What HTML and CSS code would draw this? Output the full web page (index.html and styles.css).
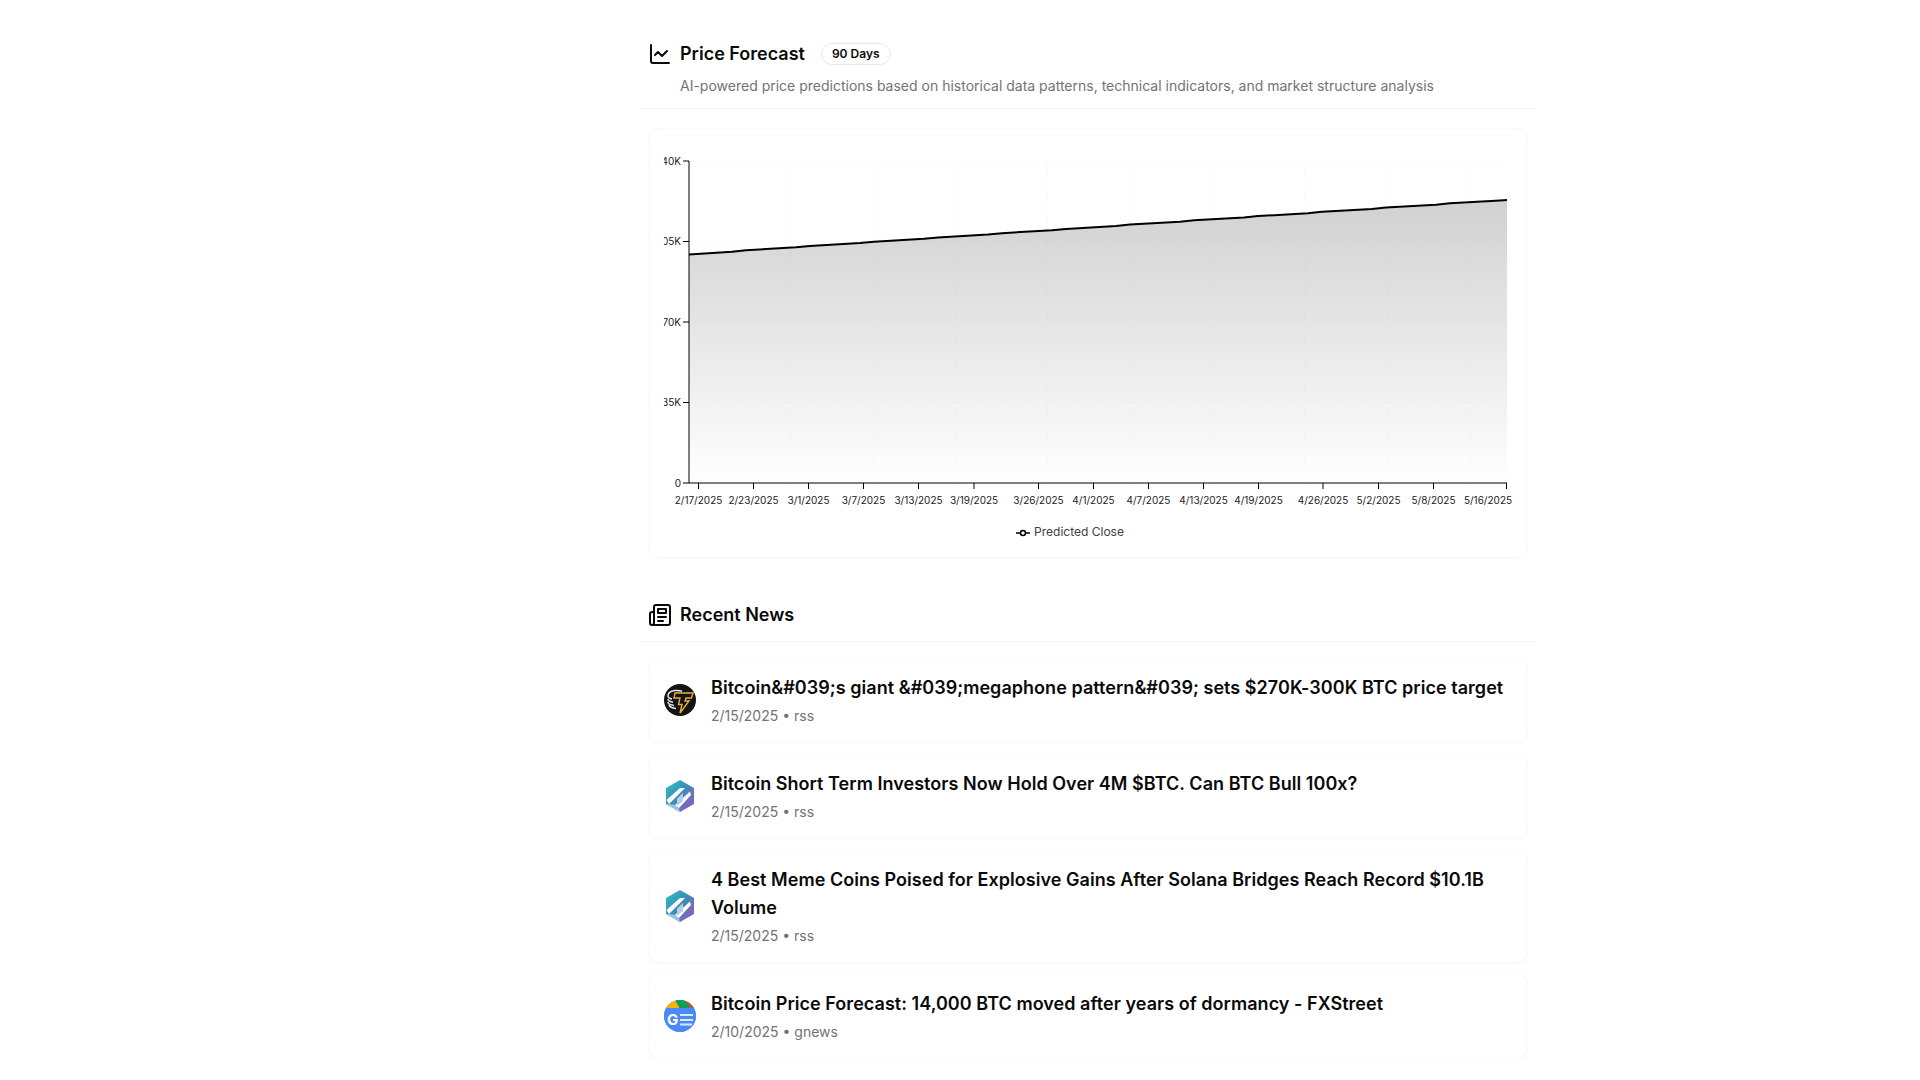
FILE: index.html
```html
<!DOCTYPE html>
<html lang="en">
<head>
    <meta charset="UTF-8">
    <meta name="viewport" content="width=device-width, initial-scale=1.0">
    <title>Price Forecast</title>
    <link rel="stylesheet" href="styles.css">
</head>
<body>

<div class="sidebar"></div>

<main class="content">
    <section class="section">
        <div class="section-head">
            <div class="section-title">
                <svg class="icon" viewBox="0 0 24 24"><path d="M3 3v16a2 2 0 0 0 2 2h16"/><path d="m19 9-5 5-4-4-3 3"/></svg>
                <h2>Price Forecast</h2>
                <span class="badge">90 Days</span>
            </div>
            <p class="section-sub">AI-powered price predictions based on historical data patterns, technical indicators, and market structure analysis</p>
        </div>

        <div class="card chart-card">
            <svg class="chart" viewBox="664 146 848 373" width="848" height="373">
                <defs>
                    <linearGradient id="areaFill" x1="0" y1="0" x2="0" y2="1">
                        <stop offset="0" stop-color="#000" stop-opacity="0.18"/>
                        <stop offset="1" stop-color="#000" stop-opacity="0"/>
                    </linearGradient>
                </defs>

                <g class="grid">
                    <line x1="689" x2="1507" y1="161.5" y2="161.5"/>
                    <line x1="689" x2="1507" y1="241.5" y2="241.5"/>
                    <line x1="689" x2="1507" y1="322.5" y2="322.5"/>
                    <line x1="689" x2="1507" y1="402.5" y2="402.5"/>
                    <line x1="790.5" x2="790.5" y1="161" y2="483"/>
                    <line x1="873.5" x2="873.5" y1="161" y2="483"/>
                    <line x1="955.5" x2="955.5" y1="161" y2="483"/>
                    <line x1="1047.5" x2="1047.5" y1="161" y2="483"/>
                    <line x1="1130.5" x2="1130.5" y1="161" y2="483"/>
                    <line x1="1213.5" x2="1213.5" y1="161" y2="483"/>
                    <line x1="1304.5" x2="1304.5" y1="161" y2="483"/>
                    <line x1="1387.5" x2="1387.5" y1="161" y2="483"/>
                    <line x1="1470.5" x2="1470.5" y1="161" y2="483"/>
                </g>

                <path class="area" d="M689 254.5l43 -2.87 l14 -1.4 l50 -2.87 l14 -1.4 l50 -2.87 l14 -1.4 l50 -2.87 l14 -1.4 l50 -2.87 l14 -1.4 l50 -2.87 l14 -1.4 l50 -2.87 l14 -1.4 l50 -2.87 l14 -1.4 l50 -2.87 l14 -1.4 l50 -2.87 l14 -1.4 l50 -2.87 l14 -1.4 l50 -2.87 l14 -1.4 l50 -2.87 l7 -0.39 V483 H689 Z"/>

                <g class="axis">
                    <line x1="689" x2="689" y1="161" y2="483"/>
                    <line x1="689" x2="1507" y1="483" y2="483"/>
                </g>
                <g class="ticks">
                    <line x1="683" x2="689" y1="161" y2="161"/>
                    <line x1="683" x2="689" y1="241.5" y2="241.5"/>
                    <line x1="683" x2="689" y1="322" y2="322"/>
                    <line x1="683" x2="689" y1="402.5" y2="402.5"/>
                    <line x1="683" x2="689" y1="483" y2="483"/>
                    <line x1="698.5" x2="698.5" y1="483" y2="489"/>
                    <line x1="753.5" x2="753.5" y1="483" y2="489"/>
                    <line x1="808.5" x2="808.5" y1="483" y2="489"/>
                    <line x1="863.5" x2="863.5" y1="483" y2="489"/>
                    <line x1="918.5" x2="918.5" y1="483" y2="489"/>
                    <line x1="974" x2="974" y1="483" y2="489"/>
                    <line x1="1038.5" x2="1038.5" y1="483" y2="489"/>
                    <line x1="1093.5" x2="1093.5" y1="483" y2="489"/>
                    <line x1="1148.5" x2="1148.5" y1="483" y2="489"/>
                    <line x1="1203.5" x2="1203.5" y1="483" y2="489"/>
                    <line x1="1258.5" x2="1258.5" y1="483" y2="489"/>
                    <line x1="1323" x2="1323" y1="483" y2="489"/>
                    <line x1="1378.5" x2="1378.5" y1="483" y2="489"/>
                    <line x1="1433.5" x2="1433.5" y1="483" y2="489"/>
                    <line x1="1506.5" x2="1506.5" y1="483" y2="489"/>
                </g>

                <path class="price-line" d="M689 254.5l43 -2.87 l14 -1.4 l50 -2.87 l14 -1.4 l50 -2.87 l14 -1.4 l50 -2.87 l14 -1.4 l50 -2.87 l14 -1.4 l50 -2.87 l14 -1.4 l50 -2.87 l14 -1.4 l50 -2.87 l14 -1.4 l50 -2.87 l14 -1.4 l50 -2.87 l14 -1.4 l50 -2.87 l14 -1.4 l50 -2.87 l14 -1.4 l50 -2.87 l7 -0.39"/>

                <g class="y-labels">
                    <text x="681" y="165">140K</text>
                    <text x="681" y="245">105K</text>
                    <text x="681" y="326">70K</text>
                    <text x="681" y="406">35K</text>
                    <text x="681" y="487">0</text>
                </g>
                <g class="x-labels">
                    <text x="698.5" y="504">2/17/2025</text>
                    <text x="753.5" y="504">2/23/2025</text>
                    <text x="808.5" y="504">3/1/2025</text>
                    <text x="863.5" y="504">3/7/2025</text>
                    <text x="918.5" y="504">3/13/2025</text>
                    <text x="974" y="504">3/19/2025</text>
                    <text x="1038.5" y="504">3/26/2025</text>
                    <text x="1093.5" y="504">4/1/2025</text>
                    <text x="1148.5" y="504">4/7/2025</text>
                    <text x="1203.5" y="504">4/13/2025</text>
                    <text x="1258.5" y="504">4/19/2025</text>
                    <text x="1323" y="504">4/26/2025</text>
                    <text x="1378.5" y="504">5/2/2025</text>
                    <text x="1433.5" y="504">5/8/2025</text>
                    <text x="1488" y="504">5/16/2025</text>
                </g>
            </svg>
            <div class="legend">
                <svg class="legend-mark" viewBox="0 0 14 8"><line x1="0" x2="14" y1="4" y2="4"/><circle cx="7" cy="4" r="2.5"/></svg>
                <span>Predicted Close</span>
            </div>
        </div>
    </section>

    <section class="section">
        <div class="section-head">
            <div class="section-title">
                <svg class="icon" viewBox="0 0 24 24"><path d="M4 22h16a2 2 0 0 0 2-2V4a2 2 0 0 0-2-2H8a2 2 0 0 0-2 2v16a2 2 0 0 1-2 2Zm0 0a2 2 0 0 1-2-2v-9c0-1.1.9-2 2-2h2"/><path d="M18 14h-8"/><path d="M15 18h-5"/><path d="M10 6h8v4h-8V6Z"/></svg>
                <h2>Recent News</h2>
            </div>
        </div>

        <div class="news-list">
            <a class="card news-item">
                <svg class="news-logo" viewBox="0 0 32 32">
                    <circle cx="16" cy="16" r="16" fill="#141414"/>
                    <g fill="none" stroke="#e8e8e8" stroke-width="1.5">
                        <path d="M4 12c0-3 3-5 7-5.5 3-.3 5 0 7 .7"/>
                        <path d="M4 12c0 1.5 1.5 2.5 4 3"/>
                        <path d="M4 15c0 1.5 2 2.6 5 3.2"/>
                        <path d="M4 18c0 1.8 2.5 3 6 3.5"/>
                        <path d="M5 21c.5 1.8 3 3 7 3.5"/>
                    </g>
                    <path d="M11 9h18l-1.5 5h-5.5l-1 3h4l-9 12 2-8.5h-3.5l1.5-6.5h-6z" fill="#141414" stroke="#e3b041" stroke-width="1.4"/>
                </svg>
                <div class="news-body">
                    <h3>Bitcoin&amp;#039;s giant &amp;#039;megaphone pattern&amp;#039; sets $270K-300K BTC price target</h3>
                    <p>2/15/2025 • rss</p>
                </div>
            </a>
            <a class="card news-item">
                <svg class="news-logo" viewBox="0 0 32 32">
                    <use href="#hexLogo"/>
                </svg>
                <div class="news-body">
                    <h3>Bitcoin Short Term Investors Now Hold Over 4M $BTC. Can BTC Bull 100x?</h3>
                    <p>2/15/2025 • rss</p>
                </div>
            </a>
            <a class="card news-item">
                <svg class="news-logo" viewBox="0 0 32 32">
                    <use href="#hexLogo"/>
                </svg>
                <div class="news-body">
                    <h3>4 Best Meme Coins Poised for Explosive Gains After Solana Bridges Reach Record $10.1B Volume</h3>
                    <p>2/15/2025 • rss</p>
                </div>
            </a>
            <a class="card news-item">
                <svg class="news-logo" viewBox="0 0 32 32">
                    <g clip-path="url(#gnewsClip)">
                        <rect width="32" height="32" fill="#4a8af4"/>
                        <path d="M0 0h32v9H0z" fill="#0f9d58"/>
                        <path d="M0 0h11L16 9H0z" fill="#f4b400"/>
                        <path d="M20 0h12v9H28z" fill="#db4437"/>
                        <path d="M0 8h32v24H0z" fill="#4a8af4"/>
                    </g>
                    <text class="logo-letter" x="3" y="25">G</text>
                    <path d="M16 15h13M16 20h13M16 24.5h12" stroke="#dbe8fd" stroke-width="2" fill="none"/>
                </svg>
                <div class="news-body">
                    <h3>Bitcoin Price Forecast: 14,000 BTC moved after years of dormancy - FXStreet</h3>
                    <p>2/10/2025 • gnews</p>
                </div>
            </a>
        </div>
    </section>
</main>

<svg class="sprite" width="0" height="0">
    <defs>
        <clipPath id="gnewsClip"><circle cx="16" cy="16" r="16"/></clipPath>
        <linearGradient id="hexFill" x1="0" y1="0" x2="1" y2="1">
            <stop offset="0" stop-color="#2ac6c6"/>
            <stop offset="0.45" stop-color="#3a8fb8"/>
            <stop offset="1" stop-color="#a24fc0"/>
        </linearGradient>
        <g id="hexLogo">
            <path d="M16 0 30 8V24L16 32 2 24V8z" fill="url(#hexFill)"/>
            <path d="M2 24 5 24 11 25 15 28 16 32z" fill="#9cc4e6"/>
            <path d="M2.5 20 16 8h5L5 24z" fill="#fff"/>
            <path d="M11 25 26 11.5 27 15 15 28z" fill="#fff"/>
            <path d="M13 18.5 19 13v8l-6 5z" fill="#b4cdea"/>
        </g>
    </defs>
</svg>

</body>
</html>
```

FILE: styles.css
```css
* {
    box-sizing: border-box;
}
body {
    font-family: 'Inter', 'Liberation Sans', sans-serif;
    margin: 0;
    padding: 0;
    background-color: #fff;
    color: #0a0a0a;
    display: flex;
}
.sidebar {
    width: 256px;
    flex-shrink: 0;
}
.content {
    width: 896px;
    margin: 0 auto;
    padding-top: 40px;
    display: flex;
    flex-direction: column;
    gap: 43px;
}
.section-head {
    padding: 0 8px 12px;
    border-bottom: 1px solid #f5f5f5;
}
.section-title {
    display: flex;
    align-items: center;
    height: 28px;
}
.section-title h2 {
    margin: 0 16px 0 8px;
    font-size: 18px;
    line-height: 28px;
    font-weight: 600;
}
.icon {
    width: 24px;
    height: 24px;
    fill: none;
    stroke: #0a0a0a;
    stroke-width: 2;
    stroke-linecap: round;
    stroke-linejoin: round;
}
.badge {
    height: 22px;
    padding: 0 10px;
    border: 1px solid #e8e8e8;
    border-radius: 999px;
    font-size: 12px;
    line-height: 20px;
    font-weight: 600;
}
.section-sub {
    margin: 8px 0 0 32px;
    font-size: 14px;
    line-height: 20px;
    color: #737373;
}
.card {
    background-color: #fff;
    border: 1px solid #fafafa;
    border-radius: 12px;
    margin: 0 8px;
    box-shadow: 0 1px 2px rgba(0,0,0,0.025);
}
.chart-card {
    margin-top: 19px;
    padding: 17px 15px 15px;
}
.chart {
    display: block;
    overflow: hidden;
}
.grid line {
    stroke: #000;
    stroke-opacity: 0.025;
    stroke-dasharray: 3 3;
}
.area {
    fill: url(#areaFill);
}
.axis line {
    stroke: #000;
    stroke-width: 1;
}
.ticks line {
    stroke: #000;
    stroke-width: 1;
}
.price-line {
    fill: none;
    stroke: #000;
    stroke-width: 2;
}
.y-labels text, .x-labels text {
    font-size: 10px;
    fill: #222;
}
.y-labels text {
    text-anchor: end;
}
.x-labels text {
    text-anchor: middle;
}
.legend {
    display: flex;
    justify-content: center;
    align-items: center;
    gap: 4px;
    margin: 3px 36px 0 0;
    font-size: 12px;
    line-height: 20px;
    color: #404040;
}
.legend-mark {
    width: 14px;
    height: 8px;
    margin-top: 2px;
}
.legend-mark line {
    stroke: #000;
    stroke-width: 1.5;
}
.legend-mark circle {
    fill: #fff;
    stroke: #000;
    stroke-width: 1.5;
}
.news-list {
    display: flex;
    flex-direction: column;
    gap: 10px;
    padding-top: 15px;
}
.news-item {
    display: flex;
    align-items: center;
    gap: 15px;
    padding: 16px 15px;
}
.news-logo {
    width: 32px;
    height: 32px;
    flex-shrink: 0;
}
.logo-letter {
    font-size: 15px;
    font-weight: 700;
    fill: #fff;
}
.news-body h3 {
    margin: 0;
    font-size: 18px;
    line-height: 28px;
    font-weight: 600;
    letter-spacing: 0.04px;
}
.news-body p {
    margin: 4px 0 0;
    font-size: 14px;
    line-height: 20px;
    color: #737373;
}
.sprite {
    position: absolute;
}
```
